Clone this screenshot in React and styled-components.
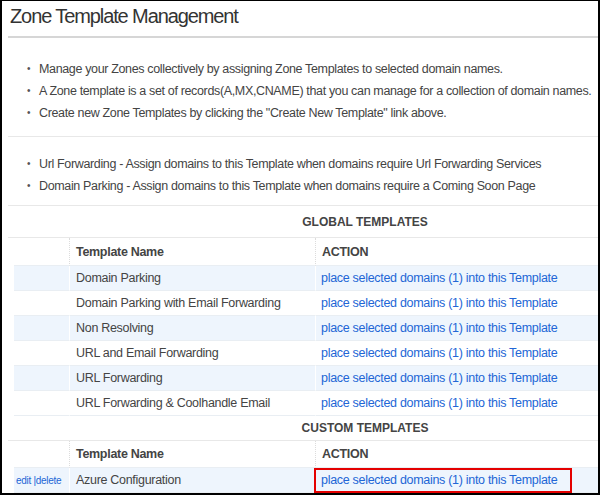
import styled, { createGlobalStyle } from "styled-components";

const Global = createGlobalStyle`
    body {
        margin: 0;
        font-family: "Liberation Sans", Arial, sans-serif;
        background: #fff;
    }
`;

const Frame = styled.div`
    box-sizing: border-box;
    width: 600px;
    height: 495px;
    border: 2px solid #000;
    border-top-width: 1px;
    padding-left: 6px;
    overflow: hidden;
    display: flex;
    flex-direction: column;
    color: #333;
`;

const Title = styled.h1`
    margin: 0;
    height: 37px;
    padding-left: 2px;
    line-height: 30px;
    font-size: 20px;
    font-weight: normal;
    letter-spacing: -1.1px;
    color: #333;
    border-bottom: 2px solid #d6d6d6;
`;

const Notes = styled.ul`
    margin: 0;
    padding: ${({ $top }) => $top}px 0 ${({ $bottom }) => $bottom}px 31px;
    border-bottom: 1px solid #e8e8e8;
    list-style: none;
`;

const Note = styled.li`
    font-size: 12.5px;
    line-height: 22px;
    letter-spacing: -0.35px;
    color: #444;
    position: relative;

    &::before {
        content: "•";
        position: absolute;
        left: -12px;
        color: #555;
        font-size: 10px;
    }
`;

const SectionHead = styled.div`
    display: flex;
    align-items: center;
    justify-content: center;
    height: ${({ $h }) => $h}px;
    padding-left: 124px;
    font-size: 12px;
    font-weight: bold;
    color: #444;
    border-bottom: 1px solid #e8e8e8;
`;

const Table = styled.div`
    margin-left: 6px;
    display: grid;
    grid-template-columns: 55px 246px 1fr;
`;

const Row = styled.div`
    display: contents;

    & > * {
        background: ${({ $alt }) => ($alt ? "#eef5fd" : "#fff")};
        border-bottom: 1px solid #e9eef3;
    }
`;

const Cell = styled.div`
    box-sizing: border-box;
    height: ${({ $h }) => $h || 25}px;
    display: flex;
    align-items: center;
    padding-left: 6px;
    font-size: 12.5px;
    letter-spacing: -0.3px;
    color: #444;
    border-left: ${({ $first }) => ($first ? "none" : "1px solid #fff")};
`;

const HeadCell = styled(Cell)`
    font-weight: bold;
    color: #444;
    border-left: ${({ $first }) => ($first ? "none" : "1px dotted #dcdcdc")};
`;

const Link = styled.a`
    color: #2266d6;
    text-decoration: none;
    cursor: pointer;
    box-sizing: border-box;
    display: flex;
    align-items: center;
    height: 25px;
    margin-left: -8px;
    padding-left: ${({ $boxed }) => ($boxed ? "5px" : "7px")};
    width: ${({ $boxed }) => ($boxed ? "258px" : "auto")};
    border: ${({ $boxed }) => ($boxed ? "2px solid #e40000" : "none")};
`;

const Small = styled.span`
    font-size: 10px;
    color: #2266d6;
    letter-spacing: -0.3px;
    margin-left: -4px;
`;

const globals = [
    "Domain Parking",
    "Domain Parking with Email Forwarding",
    "Non Resolving",
    "URL and Email Forwarding",
    "URL Forwarding",
    "URL Forwarding & Coolhandle Email",
];

const ACTION = "place selected domains (1) into this Template";

const Header = ({ h }) => (
    <Row>
        <HeadCell $first $h={h} />
        <HeadCell $h={h}>Template Name</HeadCell>
        <HeadCell $h={h}>ACTION</HeadCell>
    </Row>
);

export default function App() {
    return (
        <>
            <Global />
            <Frame>
                <Title>Zone Template Management</Title>
                <Notes $top={20} $bottom={12}>
                    <Note>Manage your Zones collectively by assigning Zone Templates to selected domain names.</Note>
                    <Note>A Zone template is a set of records(A,MX,CNAME) that you can manage for a collection of domain names.</Note>
                    <Note>Create new Zone Templates by clicking the "Create New Template" link above.</Note>
                </Notes>
                <Notes $top={16} $bottom={8}>
                    <Note>Url Forwarding - Assign domains to this Template when domains require Url Forwarding Services</Note>
                    <Note>Domain Parking - Assign domains to this Template when domains require a Coming Soon Page</Note>
                </Notes>
                <SectionHead $h={32}>GLOBAL TEMPLATES</SectionHead>
                <Table>
                    <Header h={28} />
                    {globals.map((name, i) => (
                        <Row key={name} $alt={i % 2 === 0}>
                            <Cell $first />
                            <Cell>{name}</Cell>
                            <Cell>
                                <Link>{ACTION}</Link>
                            </Cell>
                        </Row>
                    ))}
                </Table>
                <SectionHead $h={25}>CUSTOM TEMPLATES</SectionHead>
                <Table>
                    <Header h={27} />
                    <Row $alt>
                        <Cell $first>
                            <Small>edit |delete</Small>
                        </Cell>
                        <Cell>Azure Configuration</Cell>
                        <Cell>
                            <Link $boxed>{ACTION}</Link>
                        </Cell>
                    </Row>
                </Table>
            </Frame>
        </>
    );
}
